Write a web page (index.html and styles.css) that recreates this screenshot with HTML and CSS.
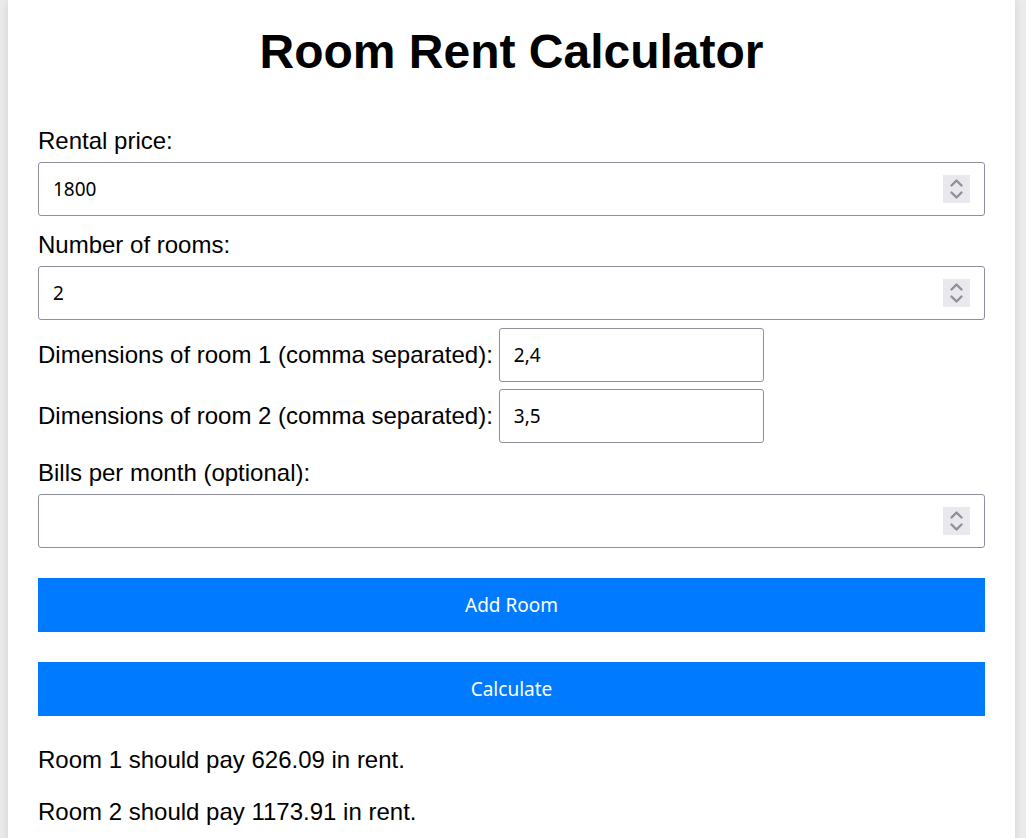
FILE: index.html
```html
<!DOCTYPE html>
<html lang="en">
<head>
<meta charset="utf-8">
<meta name="viewport" content="width=device-width, initial-scale=1">
<title>Room Rent Calculator</title>
<link rel="stylesheet" href="styles.css">
</head>
<body>
<main class="container">
  <h1 class="title">Room Rent Calculator</h1>
  <form class="form">
    <div class="field">
      <label for="rent">Rental price:</label>
      <div class="number">
        <input class="input" id="rent" type="number" value="1800">
        <span class="spinner" aria-hidden="true"><svg viewBox="0 0 27 28"><path d="M8.500 10.500l5-5 5 5M8.500 17.500l5 5 5-5"/></svg></span>
      </div>
    </div>
    <div class="field">
      <label for="rooms">Number of rooms:</label>
      <div class="number">
        <input class="input" id="rooms" type="number" value="2">
        <span class="spinner" aria-hidden="true"><svg viewBox="0 0 27 28"><path d="M8.500 10.500l5-5 5 5M8.500 17.500l5 5 5-5"/></svg></span>
      </div>
    </div>
    <div class="rooms">
      <div class="room">
        <label for="room1">Dimensions of room 1 (comma separated):</label>
        <input class="input room-input" id="room1" type="text" value="2,4">
      </div>
      <div class="room">
        <label for="room2">Dimensions of room 2 (comma separated):</label>
        <input class="input room-input" id="room2" type="text" value="3,5">
      </div>
    </div>
    <div class="field">
      <label for="bills">Bills per month (optional):</label>
      <div class="number">
        <input class="input" id="bills" type="number">
        <span class="spinner" aria-hidden="true"><svg viewBox="0 0 27 28"><path d="M8.500 10.500l5-5 5 5M8.500 17.500l5 5 5-5"/></svg></span>
      </div>
    </div>
    <button class="button" type="button">Add Room</button>
    <button class="button" type="button">Calculate</button>
  </form>
  <div class="results">
    <p>Room 1 should pay 626.09 in rent.</p>
    <p>Room 2 should pay 1173.91 in rent.</p>
  </div>
</main>
</body>
</html>
```
FILE: styles.css
```css
* {
  box-sizing: border-box;
}

body {
  margin: 0;
  padding: 0 11px 0 8px;
  background: #ebebeb;
  color: #000;
  font: 24px/28px "Liberation Sans", Arial, sans-serif;
}

.container {
  min-height: 100vh;
  padding: 25px 30px 12px;
  background: #fff;
  box-shadow: 0 0 10px rgba(0, 0, 0, 0.1);
}

.title {
  margin: 0 0 48px;
  font-size: 48px;
  line-height: 54px;
  text-align: center;
}

.form {
  display: flex;
  flex-direction: column;
}

.field {
  display: flex;
  flex-direction: column;
  gap: 7px;
  margin-bottom: 15px;
}

.number {
  position: relative;
}

.input {
  display: block;
  width: 100%;
  height: 54px;
  margin: 0;
  padding: 0 14px;
  border: 1px solid #8f8f9d;
  border-radius: 3px;
  background: #fff;
  color: #000;
  font: 19px "Noto Sans", sans-serif;
  appearance: textfield;
}

.input::-webkit-inner-spin-button {
  display: none;
}

.spinner {
  position: absolute;
  top: 13px;
  right: 15px;
  width: 27px;
  height: 28px;
  background: #e9e9ed;
  pointer-events: none;
}

.spinner svg {
  display: block;
  fill: none;
  stroke: #8f8f9d;
  stroke-width: 2.4;
  stroke-linecap: round;
  stroke-linejoin: round;
}

.rooms {
  display: flex;
  flex-direction: column;
  gap: 7px;
  margin: -7px 0 16px;
}

.room {
  display: flex;
  align-items: center;
  gap: 6px;
}

.room-input {
  width: 265px;
}

.button {
  height: 54px;
  margin: 15px 0;
  border: 0;
  background: #007bff;
  color: #fff;
  font: 19px "Noto Sans", sans-serif;
}

.results p {
  margin: 15px 0 24px;
}
```
